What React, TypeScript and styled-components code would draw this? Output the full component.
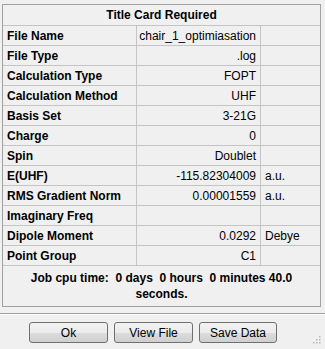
import { FC } from "react";
import styled, { createGlobalStyle } from "styled-components";

const GlobalStyle = createGlobalStyle`
  html, body {
    margin: 0;
    padding: 0;
    background: #f0f0f0;
  }
  body {
    font-family: "Liberation Sans", Arial, sans-serif;
    font-size: 12px;
    color: #000;
  }
`;

const Page = styled.div`
  width: 325px;
  height: 349px;
  background: #f0f0f0;
  padding: 4px 0 0 2px;
  box-sizing: border-box;
  display: flex;
  flex-direction: column;
  position: relative;
`;

const Panel = styled.div`
  width: 319px;
  box-sizing: border-box;
  border: 1px solid #a0a0a0;
  background: #f0f0f0;
`;

const Title = styled.div`
  height: 20px;
  border-bottom: 1px solid #c4c4c4;
  display: flex;
  align-items: center;
  justify-content: center;
  font-weight: bold;
`;

const Row = styled.div`
  display: grid;
  grid-template-columns: 133px 124px 58px;
  height: 19px;
  border-bottom: 1px solid #c4c4c4;
`;

const Cell = styled.div<{ $align?: "left" | "right" }>`
  display: flex;
  align-items: center;
  justify-content: ${(p) => (p.$align === "right" ? "flex-end" : "flex-start")};
  padding: 0 4px;
  white-space: nowrap;
  overflow: hidden;
  & + & {
    border-left: 1px solid #c4c4c4;
  }
`;

const Label = styled(Cell)`
  font-weight: bold;
`;

const CpuTime = styled.div`
  height: 40px;
  display: flex;
  align-items: center;
  justify-content: center;
  text-align: center;
  font-weight: bold;
  line-height: 16px;
  white-space: pre-wrap;
  padding: 0 26px;
`;

const Separator = styled.div`
  margin: 6px 0 0 -2px;
  width: 325px;
  height: 0;
  border-top: 1px solid #a0a0a0;
  border-bottom: 1px solid #ffffff;
`;

const ButtonBar = styled.div`
  display: flex;
  gap: 6px;
  padding: 7px 0 0 27px;
`;

const Button = styled.button<{ $w: number }>`
  width: ${(p) => p.$w}px;
  height: 21px;
  box-sizing: border-box;
  border: 1px solid #707070;
  border-radius: 3px;
  background: linear-gradient(#f2f2f2 0%, #ebebeb 50%, #dddddd 51%, #cfcfcf 100%);
  font-family: "Liberation Sans", Arial, sans-serif;
  font-size: 12px;
  color: #000;
  padding: 0;
`;

const Grip = styled.svg`
  position: absolute;
  right: 3px;
  bottom: 4px;
`;

const rows: [string, string, string][] = [
  ["File Name", "chair_1_optimiasation", ""],
  ["File Type", ".log", ""],
  ["Calculation Type", "FOPT", ""],
  ["Calculation Method", "UHF", ""],
  ["Basis Set", "3-21G", ""],
  ["Charge", "0", ""],
  ["Spin", "Doublet", ""],
  ["E(UHF)", "-115.82304009", "a.u."],
  ["RMS Gradient Norm", "0.00001559", "a.u."],
  ["Imaginary Freq", "", ""],
  ["Dipole Moment", "0.0292", "Debye"],
  ["Point Group", "C1", ""],
];

const App: FC = () => {
  return (
    <Page>
      <GlobalStyle />
      <Panel>
        <Title>Title Card Required</Title>
        {rows.map(([label, value, unit]) => (
          <Row key={label}>
            <Label>{label}</Label>
            <Cell $align="right">{value}</Cell>
            <Cell>{unit}</Cell>
          </Row>
        ))}
        <CpuTime>{"Job cpu time:  0 days  0 hours  0 minutes 40.0 seconds."}</CpuTime>
      </Panel>
      <Separator />
      <ButtonBar>
        <Button $w={79}>Ok</Button>
        <Button $w={79}>View File</Button>
        <Button $w={78}>Save Data</Button>
      </ButtonBar>
      <Grip width="12" height="12" viewBox="0 0 12 12">
        {[
          [9, 3],
          [9, 6],
          [6, 6],
          [9, 9],
          [6, 9],
          [3, 9],
        ].map(([x, y]) => (
          <rect key={`${x}-${y}`} x={x} y={y} width="1.5" height="1.5" fill="#b8b8b8" />
        ))}
      </Grip>
    </Page>
  );
};

export default App;
